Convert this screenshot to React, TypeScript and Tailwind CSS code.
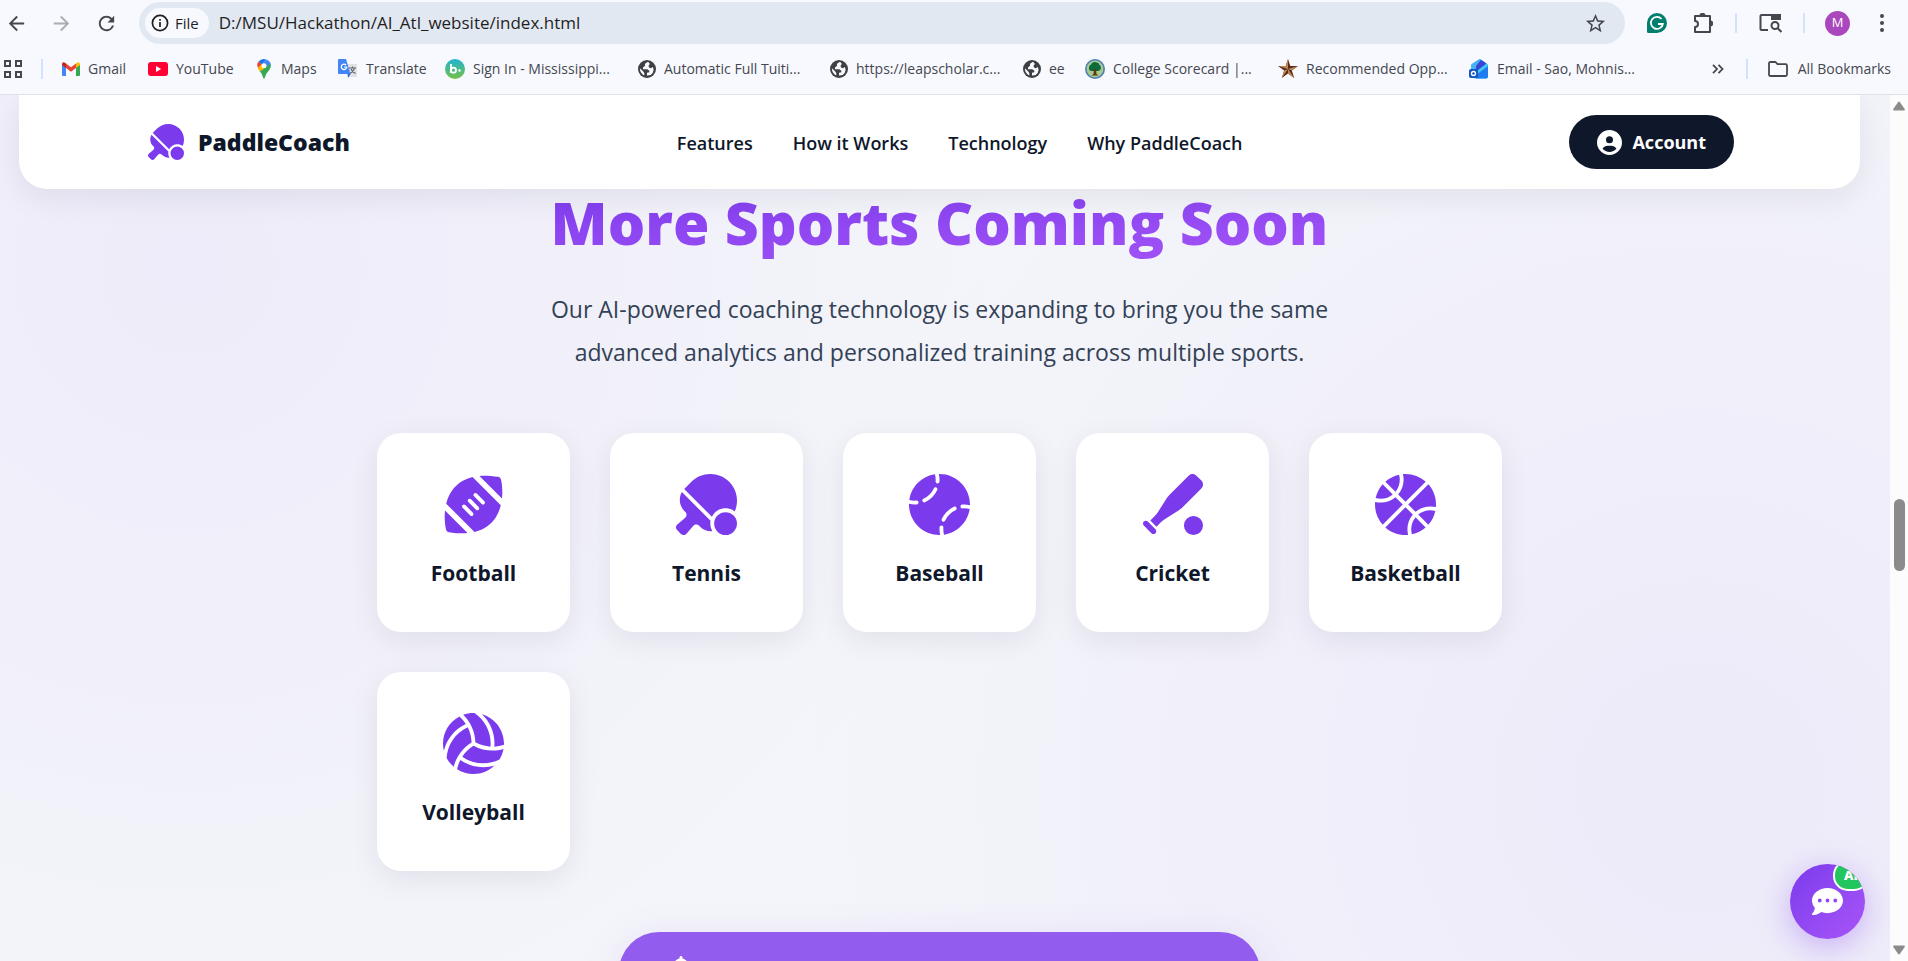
import {
  FaBaseball,
  FaBaseballBatBall,
  FaBasketball,
  FaBell,
  FaCircleUser,
  FaCommentDots,
  FaFootball,
  FaTableTennisPaddleBall,
  FaVolleyball,
} from "react-icons/fa6";
import {
  MdArrowBack,
  MdArrowForward,
  MdRefresh,
  MdStarBorder,
} from "react-icons/md";
import type { ReactNode } from "react";

const SPORTS = [
  { name: "Football", icon: FaFootball },
  { name: "Tennis", icon: FaTableTennisPaddleBall },
  { name: "Baseball", icon: FaBaseball },
  { name: "Cricket", icon: FaBaseballBatBall },
  { name: "Basketball", icon: FaBasketball },
  { name: "Volleyball", icon: FaVolleyball },
];

const NAV_LINKS = ["Features", "How it Works", "Technology", "Why PaddleCoach"];

const BOOKMARKS: { label: string; width: string; icon: ReactNode }[] = [
  { label: "Gmail", width: "w-[86px]", icon: <GmailIcon /> },
  { label: "YouTube", width: "w-[107px]", icon: <YouTubeIcon /> },
  { label: "Maps", width: "w-[83px]", icon: <MapsIcon /> },
  { label: "Translate", width: "w-[107px]", icon: <TranslateIcon /> },
  { label: "Sign In - Mississippi...", width: "w-[193px]", icon: <BIcon /> },
  { label: "Automatic Full Tuiti...", width: "w-[192px]", icon: <GlobeIcon /> },
  { label: "https://leapscholar.c...", width: "w-[193px]", icon: <GlobeIcon /> },
  { label: "ee", width: "w-[62px]", icon: <GlobeIcon /> },
  { label: "College Scorecard |...", width: "w-[193px]", icon: <TreeIcon /> },
  { label: "Recommended Opp...", width: "w-[191px]", icon: <TexasStarIcon /> },
  { label: "Email - Sao, Mohnis...", width: "w-[190px]", icon: <OutlookIcon /> },
];

export default function App() {
  return (
    <div className="flex h-screen flex-col overflow-hidden bg-[#f8f9fe] font-['Open_Sans',sans-serif] text-[#0f172a]">
      <BrowserBar />
      <div className="flex min-h-0 flex-1">
        <div className="relative flex-1 overflow-hidden bg-[#f4f5fa] bg-[radial-gradient(circle_at_10%_20%,rgba(124,58,237,0.05),transparent_45%),radial-gradient(circle_at_90%_80%,rgba(124,58,237,0.06),transparent_50%)] pr-[11px]">
          <SiteHeader />
          <ComingSoon />
          <ChatButton />
        </div>
        <Scrollbar />
      </div>
    </div>
  );
}

function BrowserBar() {
  return (
    <div className="shrink-0 border-b border-[#dfe1e8]">
      <div className="flex h-[46px] items-center pr-6 pl-[5px]">
        <div className="flex w-[134px] items-center gap-[22px] text-[#44474f]">
          <button aria-label="Back">
            <MdArrowBack size={23} />
          </button>
          <button aria-label="Forward" className="text-[#a9acb3]">
            <MdArrowForward size={23} />
          </button>
          <button aria-label="Reload">
            <MdRefresh size={23} />
          </button>
        </div>
        <div className="flex h-[42px] flex-1 items-center rounded-full bg-[#e2e8f2] px-1.5">
          <button className="flex h-[30px] items-center gap-1.5 rounded-full bg-[#f8f9fe] px-1.5 pr-2.5 text-[15px] font-medium text-[#1f1f1f]">
            <InfoIcon />
            File
          </button>
          <input
            aria-label="Address"
            className="ml-2.5 min-w-0 flex-1 bg-transparent text-[17px] text-[#1f1f1f] outline-none"
            defaultValue="D:/MSU/Hackathon/AI_Atl_website/index.html"
          />
          <button aria-label="Bookmark this page" className="mr-3 text-[#44474f]">
            <MdStarBorder size={23} />
          </button>
        </div>
        <div className="flex items-center pl-[22px] text-[#44474f]">
          <GrammarlyIcon />
          <PuzzleIcon />
          <span className="ml-5 h-5 w-0.5 bg-[#d3e3fd]" />
          <TabSearchIcon />
          <span className="ml-5 h-5 w-0.5 bg-[#d3e3fd]" />
          <span className="ml-5 grid size-[25px] place-items-center rounded-full bg-[#ab47bc] text-[13px] text-white">
            M
          </span>
          <button aria-label="Menu" className="ml-[30px]">
            <KebabIcon />
          </button>
        </div>
      </div>
      <div className="flex h-12 items-center pr-[17px] pb-0.5 pl-1 text-sm text-[#44474f]">
        <AppsIcon />
        <span className="mr-[19px] ml-[19px] h-5 w-0.5 shrink-0 bg-[#d3e3fd]" />
        {BOOKMARKS.map((bookmark) => (
          <a
            key={bookmark.label}
            href="#"
            className={`flex shrink-0 items-center gap-2 whitespace-nowrap ${bookmark.width}`}
          >
            {bookmark.icon}
            {bookmark.label}
          </a>
        ))}
        <div className="ml-auto flex items-center whitespace-nowrap">
          <button aria-label="More bookmarks">
            <ChevronsIcon />
          </button>
          <span className="mr-5 ml-[22px] h-5 w-0.5 bg-[#d3e3fd]" />
          <a href="#" className="flex items-center gap-2.5">
            <FolderIcon />
            All Bookmarks
          </a>
        </div>
      </div>
    </div>
  );
}

function SiteHeader() {
  return (
    <header className="relative z-10 mx-[19px] flex h-[94px] items-center justify-between rounded-b-[28px] bg-white pr-[126px] pl-[129px] shadow-[0_8px_32px_rgba(15,23,42,0.08)]">
      <a href="#" className="flex items-center gap-3.5 text-[23px] font-extrabold">
        <FaTableTennisPaddleBall className="size-9 text-[#7c3aed]" />
        PaddleCoach
      </a>
      <nav className="flex gap-10 pt-0.5 text-lg font-semibold">
        {NAV_LINKS.map((link) => (
          <a key={link} href="#">
            {link}
          </a>
        ))}
      </nav>
      <button className="flex h-[54px] items-center gap-2.5 rounded-full bg-[#0f172a] px-7 text-lg font-bold text-white">
        <FaCircleUser className="size-[25px]" />
        Account
      </button>
    </header>
  );
}

function ComingSoon() {
  return (
    <section className="mx-auto flex max-w-[1125px] flex-col items-center">
      <h2 className="w-full bg-linear-to-br from-[#7c3aed] to-[#a855f7] bg-clip-text pb-2 text-center text-[59px] leading-[66px] font-extrabold text-transparent">
        More Sports Coming Soon
      </h2>
      <p className="mt-[25px] max-w-[820px] text-center text-[23px] leading-[43px] text-[#334155]">
        Our AI-powered coaching technology is expanding to bring you the same
        advanced analytics and personalized training across multiple sports.
      </p>
      <div className="mt-[59px] grid w-full grid-cols-5 gap-10">
        {SPORTS.map(({ name, icon: Icon }) => (
          <article
            key={name}
            className="flex h-[199px] flex-col items-center rounded-3xl bg-white pt-[41px] shadow-[0_8px_30px_rgba(15,23,42,0.08)]"
          >
            <Icon aria-hidden="true" className="size-[61px] text-[#7c3aed]" />
            <h3 className="mt-5 text-[21px] leading-9 font-bold">{name}</h3>
          </article>
        ))}
      </div>
      <button className="mt-[61px] flex h-[90px] w-[641px] items-start rounded-[40px] bg-[#925cee] px-[50px] pt-6 text-white shadow-[0_10px_40px_rgba(124,58,237,0.15)]">
        <FaBell aria-label="Notify me" className="size-6" />
      </button>
    </section>
  );
}

function ChatButton() {
  return (
    <button
      aria-label="Open chat"
      className="absolute right-[25px] bottom-[22px] grid size-[75px] place-items-center overflow-hidden rounded-full bg-linear-to-br from-[#7c3aed] to-[#a855f7] text-white shadow-[0_8px_32px_rgba(124,58,237,0.35)]"
    >
      <FaCommentDots className="size-[31px]" />
      <span className="absolute -top-1 -right-1 flex h-[31px] w-9 items-center justify-center rounded-[15px] border-2 border-white bg-[#22c55e] text-[13px] font-extrabold">
        AI
      </span>
    </button>
  );
}

function Scrollbar() {
  return (
    <div className="flex w-[18px] flex-col items-center bg-[#fcfcfc] py-1.5 text-[#8b8b8b]">
      <svg viewBox="0 0 12 10" className="h-2.5 w-3" fill="currentColor">
        <path d="M5.200.9q.8-.8 1.600 0L11.700 8q.5 1.500-.9 1.500H1.200Q-.2 9.500.3 8Z" />
      </svg>
      <span className="mt-[388px] h-[72px] w-[11px] rounded-full bg-[#8b8b8b]" />
      <svg viewBox="0 0 12 10" className="mt-auto h-2.5 w-3" fill="currentColor">
        <path d="M5.200 9.100q.8.800 1.600 0L11.700 2q.5-1.500-.9-1.500H1.200Q-.2.500.3 2Z" />
      </svg>
    </div>
  );
}

/* Toolbar icons */

function InfoIcon() {
  return (
    <svg viewBox="0 0 18 18" className="size-[18px]" fill="none" stroke="currentColor" strokeWidth="1.700">
      <circle cx="9" cy="9" r="7.600" />
      <path d="M9 8v5M9 5v1.700" />
    </svg>
  );
}

function GrammarlyIcon() {
  return (
    <svg viewBox="0 0 20 20" className="size-5">
      <path d="M10 0a10 10 0 1 1 0 20H1.500A1.500 1.500 0 0 1 0 18.500V10A10 10 0 0 1 10 0Z" fill="#027e6f" />
      <path d="M14.500 6A6 6 0 1 0 15.800 11H11M15.800 11l-1 3" fill="none" stroke="#fff" strokeWidth="1.800" />
    </svg>
  );
}

function PuzzleIcon() {
  return (
    <svg viewBox="0 0 22 22" className="ml-[26px] size-[22px]" fill="none" stroke="currentColor" strokeWidth="2" strokeLinejoin="round">
      <path d="M2 4h5.500a2 2 0 0 1 4 0H17v5.500a2 2 0 0 1 0 4V20H2v-5a3 3 0 0 0 0-6Z" />
      <path d="M7.500 4a2 2 0 0 1 4 0ZM17 9.500a2 2 0 0 1 0 4Z" fill="currentColor" />
    </svg>
  );
}

function TabSearchIcon() {
  return (
    <svg viewBox="0 0 24 20" className="ml-[22px] h-5 w-6" fill="none" stroke="currentColor" strokeWidth="2">
      <path d="M9 17H2.500A1 1 0 0 1 1.500 16V3a1 1 0 0 1 1-1H21v5" />
      <path d="M12 1h8.500q1.500 0 1.500 1.500V7H12Z" fill="currentColor" stroke="none" />
      <circle cx="16" cy="12.500" r="3.500" />
      <path d="m18.500 15 4 4" />
    </svg>
  );
}

function KebabIcon() {
  return (
    <svg viewBox="0 0 4 18" className="h-[18px] w-1" fill="currentColor">
      <circle cx="2" cy="2" r="2" />
      <circle cx="2" cy="9" r="2" />
      <circle cx="2" cy="16" r="2" />
    </svg>
  );
}

/* Bookmark icons */

function AppsIcon() {
  return (
    <svg viewBox="0 0 18 18" className="size-[18px] shrink-0" fill="none" stroke="currentColor" strokeWidth="2">
      <path d="M1 1h5v5H1ZM12 1h5v5h-5ZM1 12h5v5H1ZM12 12h5v5h-5Z" />
    </svg>
  );
}

function GmailIcon() {
  return (
    <svg viewBox="0 0 18 14" className="h-3.5 w-[18px]">
      <path d="M0 2v11q0 1 1 1h3V5Z" fill="#4285f4" />
      <path d="M18 2v11q0 1-1 1h-3V5Z" fill="#34a853" />
      <path d="M14 1.500V6l4-3V2q-.5-2.500-3-1.200Z" fill="#fbbc04" />
      <path d="M4 6V1.500l5 3.700 5-3.700V6L9 9.700Z" fill="#ea4335" />
      <path d="M0 2v1l4 3V1.500L3 .8Q.5-.5 0 2Z" fill="#c5221f" />
    </svg>
  );
}

function YouTubeIcon() {
  return (
    <svg viewBox="0 0 20 14" className="h-3.5 w-5">
      <rect width="20" height="14" rx="3" fill="#ff0033" />
      <path d="m8 4 5.200 3L8 10Z" fill="#fff" />
    </svg>
  );
}

function MapsIcon() {
  return (
    <svg viewBox="0 0 18 20" className="h-5 w-[18px]">
      <path d="M3.600 2.500 9 7 5 11.500 3.300 9.500Q1 5.500 3.600 2.500Z" fill="#ea4335" />
      <path d="M3.600 2.500Q6.500-1 11.200.4L7 5.500Z" fill="#1a73e8" />
      <path d="M11.200.4q3.300 1 4.500 4.200L9 12 7 5.500Z" fill="#4285f4" />
      <path d="M3 8.500 7 5l4 3-6 5Q3.300 10.500 3 8.500Z" fill="#fbbc04" />
      <path d="M15.700 4.600q.8 3.500-1.500 6.500Q10.500 15 9.700 19q-.7 1.500-1.400 0Q7.500 15 5 12.500Z" fill="#34a853" />
      <circle cx="9" cy="6.700" r="2.500" fill="#fff" />
    </svg>
  );
}

function TranslateIcon() {
  return (
    <svg viewBox="0 0 20 20" className="size-5">
      <path d="M8 5h11v12q0 1-1 1h-7Z" fill="#dfe1e5" />
      <path d="M11 9h7M14.500 7.500V9M16.500 9q-.5 3-4.500 5.500M13 10q1 3 4.500 4.500" fill="none" stroke="#5f6368" strokeWidth="1.100" />
      <path d="M1 0h7l4.500 15H1q-1 0-1-1V1q0-1 1-1Z" fill="#4285f4" />
      <path d="M9.500 15h3L10 19Z" fill="#3a5fc8" />
      <path d="M8 6A2.700 2.700 0 1 0 8.700 8H6" fill="none" stroke="#fff" strokeWidth="1.200" />
    </svg>
  );
}

function BIcon() {
  return (
    <svg viewBox="0 0 20 20" className="size-5">
      <defs>
        <linearGradient id="b-fill" x1="0" y1="0" x2="0" y2="1">
          <stop offset="0" stopColor="#1eb5d4" />
          <stop offset="1" stopColor="#76c043" />
        </linearGradient>
      </defs>
      <circle cx="10" cy="10" r="10" fill="url(#b-fill)" />
      <path d="M6 5v9" stroke="#fff" strokeWidth="1.800" />
      <circle cx="8.500" cy="11.200" r="2.500" fill="none" stroke="#fff" strokeWidth="1.800" />
      <circle cx="14.500" cy="11.500" r="1.200" fill="#fff" />
    </svg>
  );
}

function GlobeIcon() {
  return (
    <svg viewBox="0 0 18 18" className="size-[18px]">
      <circle cx="9" cy="9" r="9" fill="#3c4043" />
      <path
        d="M10 1.800 7 3.800v2L5 7.600v1.600h4.300l2 1.500v1.500l-2.300.6v2.800q4 .2 5.700-2.600 1.600-3.200.3-6l-2.300 1.300-2-1V5.300l1.300-1.200ZM1.900 8.300q0 5 4.400 7.200v-2.600L4.800 11Z"
        fill="#f8f9fe"
      />
    </svg>
  );
}

function TreeIcon() {
  return (
    <svg viewBox="0 0 20 20" className="size-5">
      <circle cx="10" cy="10" r="9.200" fill="#a9c98f" stroke="#4a7fb8" strokeWidth="1.600" />
      <path d="M4 10q-.5-3 2-4.500 1.500-3 5-2.300 3 .3 3.500 2.800 2.300 1.500 1 4.500-1.500 2-4 1.500H7Q4.500 12.500 4 10Z" fill="#0e6b3a" />
      <path d="M9 10h2l.5 5 2 1.500h-7l2-1.500Z" fill="#5a3a12" />
    </svg>
  );
}

function TexasStarIcon() {
  return (
    <svg viewBox="0 0 20 20" className="size-5">
      <path d="m10 0 2.300 7H20l-6.200 4.400L16.200 19 10 14.400 3.800 19l2.400-7.600L0 7h7.700Z" fill="#5f2a1d" />
      <path d="M10 0v10L7.700 7ZM20 7l-10 3 3.800 1.400ZM16.200 19 10 10v4.400ZM3.800 19 10 10l-3.800 1.400ZM0 7l10 3-2.300-3Z" fill="#b88a54" />
    </svg>
  );
}

function OutlookIcon() {
  return (
    <svg viewBox="0 0 20 20" className="size-5">
      <path d="M4 5.500 11 0l8 5.500v12q0 2-2 2H6q-2 0-2-2Z" fill="#41c8f5" />
      <path d="M2 6.500q0-1 1-1.700L9.500.5q1-.7 2 0L15 3 5 12H2Z" fill="#45b4f7" />
      <path d="m12 .8 5.500 3.700L7 12.500V7Z" fill="#3a45d6" />
      <path d="m19 7-12 9v3.500h10q2 0 2-2Z" fill="#1f7df0" />
      <rect y="10" width="9" height="9" rx="2" fill="#1257c7" />
      <circle cx="4.500" cy="14.500" r="2" fill="none" stroke="#fff" strokeWidth="1.400" />
    </svg>
  );
}

function ChevronsIcon() {
  return (
    <svg viewBox="0 0 12 10" className="h-2.5 w-3" fill="none" stroke="currentColor" strokeWidth="1.800">
      <path d="m1 .8 4 4.200-4 4.200M6.500.8l4 4.200-4 4.200" />
    </svg>
  );
}

function FolderIcon() {
  return (
    <svg viewBox="0 0 20 16" className="h-4 w-5" fill="none" stroke="currentColor" strokeWidth="1.800" strokeLinejoin="round">
      <path d="M1 13.500v-11Q1 1 2.500 1H7.500l2 2.200h8q1.500 0 1.500 1.500v8.800q0 1.500-1.500 1.500h-15Q1 15 1 13.500Z" />
    </svg>
  );
}
